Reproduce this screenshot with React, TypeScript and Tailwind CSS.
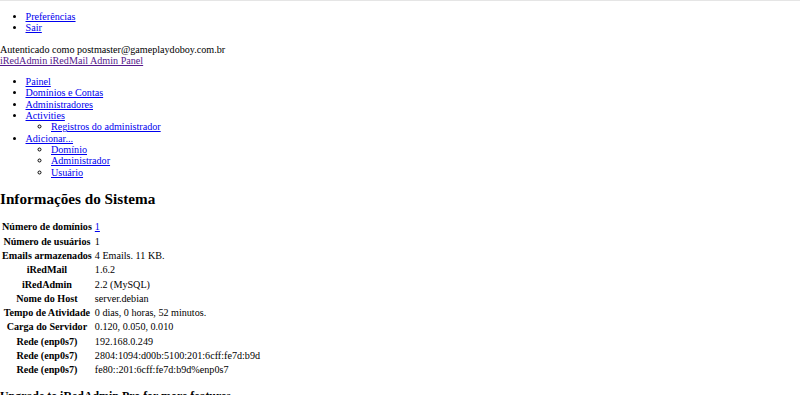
export default function App() {
  const link = "text-[#0000ee] underline";
  const rows: [string, React.ReactNode][] = [
    ["Número de domínios", <a href="#" className={link}>1</a>],
    ["Número de usuários", "1"],
    ["Emails armazenados", "4 Emails. 11 KB."],
    ["iRedMail", "1.6.2"],
    ["iRedAdmin", "2.2 (MySQL)"],
    ["Nome do Host", "server.debian"],
    ["Tempo de Atividade", "0 dias, 0 horas, 52 minutos."],
    ["Carga do Servidor", "0.120, 0.050, 0.010"],
    ["Rede (enp0s7)", "192.168.0.249"],
    ["Rede (enp0s7)", "2804:1094:d00b:5100:201:6cff:fe7d:b9d"],
    ["Rede (enp0s7)", "fe80::201:6cff:fe7d:b9d%enp0s7"],
  ];

  return (
    <div className="h-[395px] overflow-hidden bg-white border-t border-[#e5e5e5] font-['Liberation_Serif',serif] text-[10.15px] leading-[11.3px] text-black">
      {/* Top links */}
      <ul className="my-[10px] pl-[25.5px] list-disc">
        <li><a href="#" className={link}>Preferências</a></li>
        <li><a href="#" className={link}>Sair</a></li>
      </ul>
      <div>Autenticado como postmaster@gameplaydoboy.com.br</div>
      <a href="#" className="text-[#551a8b] underline">iRedAdmin iRedMail Admin Panel</a>

      {/* Navigation */}
      <ul className="my-[10px] pl-[25.5px] list-disc">
        <li><a href="#" className={link}>Painel</a></li>
        <li><a href="#" className={link}>Domínios e Contas</a></li>
        <li><a href="#" className={link}>Administradores</a></li>
        <li>
          <a href="#" className={link}>Activities</a>
          <ul className="pl-[25.5px] list-[circle]">
            <li><a href="#" className={link}>Registros do administrador</a></li>
          </ul>
        </li>
        <li>
          <a href="#" className={link}>Adicionar...</a>
          <ul className="pl-[25.5px] list-[circle]">
            <li><a href="#" className={link}>Domínio</a></li>
            <li><a href="#" className={link}>Administrador</a></li>
            <li><a href="#" className={link}>Usuário</a></li>
          </ul>
        </li>
      </ul>

      <h2 className="text-[15.2px] leading-[17.5px] font-bold my-[12px]">Informações do Sistema</h2>

      <table className="border-separate border-spacing-[1px]">
        <tbody>
          {rows.map(([k, v], i) => (
            <tr key={i}>
              <th className="font-bold text-center py-[1px] px-[1px]">{k}</th>
              <td className="py-[1px] px-[1px]">{v}</td>
            </tr>
          ))}
        </tbody>
      </table>

      <h3 className="text-[11.9px] leading-[13.7px] font-bold my-[11.9px]">Upgrade to iRedAdmin Pro for more features</h3>
    </div>
  );
}
